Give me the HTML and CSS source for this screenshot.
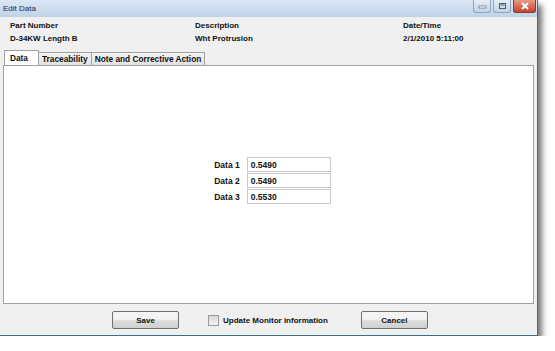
FILE: index.html
```html
<!DOCTYPE html>
<html lang="en">
<head>
    <meta charset="UTF-8">
    <title>Edit Data</title>
    <link rel="stylesheet" href="styles.css">
</head>
<body>
    <div class="window">
        <div class="titlebar">
            <span class="title">Edit Data</span>
            <div class="controls">
                <span class="ctl min"><svg width="9" height="6" viewBox="0 0 9 6"><rect x="1" y="3" width="7" height="2" fill="#fff" stroke="#4a5a70" stroke-width="0.6"/></svg></span>
                <span class="ctl max"><svg width="9" height="8" viewBox="0 0 9 8"><rect x="1.5" y="1.5" width="6" height="5" fill="none" stroke="#4a5a70" stroke-width="1"/><rect x="2.5" y="2.5" width="4" height="1" fill="#4a5a70"/></svg></span>
                <span class="ctl close"><svg width="10" height="8" viewBox="0 0 10 8"><path d="M2 1 L8 7 M8 1 L2 7" stroke="#fff" stroke-width="2"/></svg></span>
            </div>
        </div>
        <div class="client">
            <div class="header">
                <div class="field">
                    <div>Part Number</div>
                    <div>D-34KW Length B</div>
                </div>
                <div class="field">
                    <div>Description</div>
                    <div>Wht Protrusion</div>
                </div>
                <div class="field">
                    <div>Date/Time</div>
                    <div>2/1/2010 5:11:00</div>
                </div>
            </div>
            <div class="tabs">
                <span class="tab active">Data</span>
                <span class="tab">Traceability</span>
                <span class="tab">Note and Corrective Action</span>
            </div>
            <div class="panel">
                <div class="data-grid">
                    <label>Data 1</label><span class="box">0.5490</span>
                    <label>Data 2</label><span class="box">0.5490</span>
                    <label>Data 3</label><span class="box">0.5530</span>
                </div>
            </div>
            <div class="footer">
                <button class="btn">Save</button>
                <span class="check"><span class="checkbox"></span>Update Monitor information</span>
                <button class="btn">Cancel</button>
            </div>
        </div>
    </div>
</body>
</html>
```

FILE: styles.css
```css
/* General Styling */
body {
    margin: 0;
    background: #ffffff;
    font-family: 'Liberation Sans', Arial, sans-serif;
    font-size: 8px;
    color: #111111;
}
.window {
    width: 537px;
    height: 335px;
    background: #c9d9ea;
    border-right: 1px solid #3d6e8e;
    border-bottom: 1px solid #3d6e8e;
    box-shadow: 4px 5px 6px rgba(0, 0, 0, 0.55);
    display: flex;
    flex-direction: column;
}
.titlebar {
    height: 17px;
    display: flex;
    align-items: center;
    justify-content: space-between;
    background: linear-gradient(#dbe7f4, #bfd2e6);
    padding-left: 3px;
}
.title {
    font-size: 8px;
    color: #1e2a3a;
}
.controls {
    display: flex;
    gap: 2px;
    margin-right: 1px;
    align-self: flex-start;
}
.ctl {
    height: 13px;
    width: 18px;
    display: flex;
    align-items: center;
    justify-content: center;
    border: 1px solid #8ea3bc;
    border-top: none;
    border-radius: 0 0 3px 3px;
    background: linear-gradient(#e6eef7, #c3d3e5);
    box-sizing: border-box;
}
.ctl.close {
    width: 23px;
    border-color: #8a3a2c;
    background: linear-gradient(#e89a86, #c5432b);
}
.client {
    flex: 1;
    background: #f0f0f0;
    display: flex;
    flex-direction: column;
}
.header {
    display: grid;
    grid-template-columns: 185px 208px auto;
    padding: 2px 0 0 10px;
    font-weight: bold;
    height: 32px;
}
.field div {
    line-height: 13px;
}
.tabs {
    display: flex;
    padding-left: 4px;
    height: 14px;
    align-items: flex-end;
    font-weight: bold;
    font-size: 8.3px;
}
.tab {
    height: 12px;
    line-height: 12px;
    padding: 0 3px;
    border: 1px solid #a0a0a0;
    border-bottom: none;
    border-left: none;
    background: linear-gradient(#f4f4f4, #e2e2e2);
}
.tab.active {
    height: 15px;
    line-height: 14px;
    margin-bottom: -1px;
    padding: 0 10px 0 5px;
    background: #ffffff;
    border-left: 1px solid #a0a0a0;
}
.panel {
    height: 237px;
    margin: 0 3px;
    background: #ffffff;
    border: 1px solid #a0a0a0;
    display: flex;
    align-items: center;
    justify-content: center;
}
.data-grid {
    display: grid;
    grid-template-columns: auto 84px;
    column-gap: 7px;
    row-gap: 1px;
    align-items: center;
    margin: 0 0 8px 8px;
    font-weight: bold;
    font-size: 8.5px;
}
.data-grid label {
    text-align: right;
}
.box {
    height: 15px;
    line-height: 14px;
    padding-left: 3px;
    border: 1px solid #c8c8c8;
    box-sizing: border-box;
    background: #ffffff;
}
.footer {
    flex: 1;
    display: flex;
    align-items: center;
    padding-left: 112px;
    padding-top: 1px;
    font-weight: bold;
}
.btn {
    width: 67px;
    height: 18px;
    font-family: inherit;
    font-size: 8px;
    font-weight: bold;
    color: #111111;
    border: 1px solid #707070;
    border-radius: 2px;
    background: linear-gradient(#f4f4f4 45%, #dcdcdc 55%, #d0d0d0);
    padding: 0;
}
.check {
    display: flex;
    align-items: center;
    margin: 0 33px 0 29px;
}
.checkbox {
    width: 9px;
    height: 9px;
    border: 1px solid #9a9a9a;
    background: linear-gradient(#d8d8d8, #f4f4f4);
    margin-right: 4px;
}
```
